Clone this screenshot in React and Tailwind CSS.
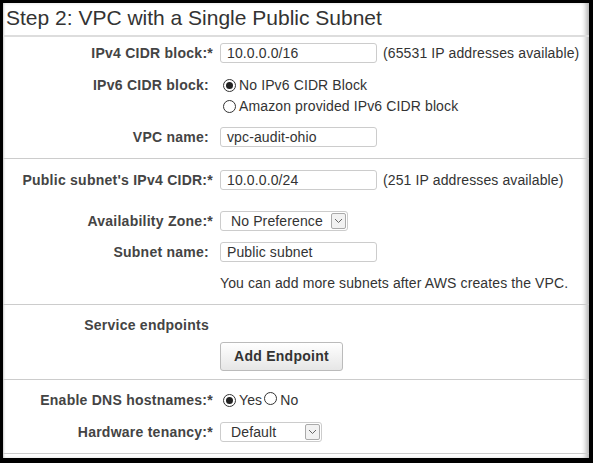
import React from "react";

const F = { fontFamily: '"Liberation Sans", Arial, sans-serif' };

function Label({ children, star, top }) {
  return (
    <div className={`w-[206px] shrink-0 text-right text-[14px] font-bold tracking-[0.25px] text-[#444] ${top ? "self-start leading-[21px]" : ""}`}>
      {children}
      {star ? <span className="mr-[-4px]">*</span> : null}
    </div>
  );
}

function Input({ value, w = "w-[157px]" }) {
  return (
    <div className={`${w} h-[20px] rounded-[3px] border border-[#cccccc] bg-white pl-[6px] text-[14px] leading-[18px] tracking-[0.12px] text-[#333]`}>
      {value}
    </div>
  );
}

function Chevron() {
  return (
    <svg width="9" height="6" viewBox="0 0 9 6">
      <path d="M1 1 L4.5 4.5 L8 1" fill="none" stroke="#666" strokeWidth="1" />
    </svg>
  );
}

function Select({ value, w }) {
  return (
    <div className={`${w} flex h-[20px] items-center justify-between rounded-[3px] border border-[#cccccc] bg-white pl-[10px] pr-[1px] text-[14px] tracking-[0.12px] text-[#333]`}>
      <span className="leading-[18px]">{value}</span>
      <div className="flex h-[16px] w-[15px] items-center justify-center rounded-[2px] border border-[#aaaaaa] bg-[#f2f2f2]">
        <Chevron />
      </div>
    </div>
  );
}

function Radio({ checked }) {
  return (
    <span className="inline-flex h-[13px] w-[13px] items-center justify-center rounded-full border border-[#333] bg-white">
      {checked ? <span className="h-[7px] w-[7px] rounded-full bg-[#222]" /> : null}
    </span>
  );
}

function Row({ children, className = "" }) {
  return <div className={`flex items-center gap-x-[11px] ${className}`}>{children}</div>;
}

export default function App() {
  return (
    <div className="h-[463px] w-[593px] bg-black pl-[3px] pr-[4px] pt-[3px]" style={F}>
      <div className="relative h-[455px] w-[586px] overflow-hidden bg-white shadow-[inset_-5px_0_5px_-2px_rgba(0,0,0,0.3),inset_2px_0_2px_-1px_rgba(0,0,0,0.2)]">
        <div className="flex h-[32px] items-center pb-[3px] pl-[3px] text-[21px] leading-none text-[#333]">
          Step 2: VPC with a Single Public Subnet
        </div>
        <div className="h-[2px] bg-[#dddddd]" />

        <div className="pb-[11px]">
          <Row className="mt-[6px] h-[20px]">
            <Label star>IPv4 CIDR block:</Label>
            <Input value="10.0.0.0/16" />
            <span className="ml-[-5px] text-[14px] tracking-[0.12px] text-[#333]">(65531 IP addresses available)</span>
          </Row>
          <Row className="mt-[12px] items-start">
            <Label top>IPv6 CIDR block:</Label>
            <div className="flex flex-col text-[14px] tracking-[0.12px] text-[#333]">
              <div className="flex h-[21px] items-center gap-[3px] pl-[3px]">
                <Radio checked />
                <span>No IPv6 CIDR Block</span>
              </div>
              <div className="flex h-[21px] items-center gap-[3px] pl-[3px]">
                <Radio />
                <span>Amazon provided IPv6 CIDR block</span>
              </div>
            </div>
          </Row>
          <Row className="mt-[10px] h-[20px]">
            <Label>VPC name:</Label>
            <Input value="vpc-audit-ohio" />
          </Row>
        </div>
        <div className="h-px bg-[#cccccc]" />

        <div className="pb-[11px]">
          <Row className="mt-[11px] h-[20px]">
            <Label star>Public subnet's IPv4 CIDR:</Label>
            <Input value="10.0.0.0/24" />
            <span className="ml-[-5px] text-[14px] tracking-[0.12px] text-[#333]">(251 IP addresses available)</span>
          </Row>
          <Row className="mt-[21px] h-[20px]">
            <Label star>Availability Zone:</Label>
            <Select value="No Preference" w="w-[128px]" />
          </Row>
          <Row className="mt-[11px] h-[20px]">
            <Label>Subnet name:</Label>
            <Input value="Public subnet" />
          </Row>
          <div className="mt-[11px] flex h-[20px] items-center pl-[217px] text-[14px] tracking-[0.12px] text-[#333]">
            You can add more subnets after AWS creates the VPC.
          </div>
        </div>
        <div className="h-px bg-[#cccccc]" />

        <div className="pb-[8px]">
          <Row className="mt-[10px] h-[20px]">
            <Label>Service endpoints</Label>
          </Row>
          <div className="mt-[7px] pl-[217px]">
            <div className="flex h-[29px] w-[123px] items-center justify-center rounded-[3px] border border-[#bbbbbb] bg-gradient-to-b from-white to-[#e6e6e6] text-[14px] font-bold tracking-[0.25px] text-[#333]">
              Add Endpoint
            </div>
          </div>
        </div>
        <div className="h-px bg-[#cccccc]" />

        <div className="pb-[11px]">
          <Row className="mt-[10px] h-[20px]">
            <Label star>Enable DNS hostnames:</Label>
            <div className="flex items-center pl-[3px] text-[14px] tracking-[0.12px] text-[#333]">
              <Radio checked />
              <span className="ml-[3px]">Yes</span>
              <span className="ml-[2px]"><Radio /></span>
              <span className="ml-[3px]">No</span>
            </div>
          </Row>
          <Row className="mt-[12px] h-[20px]">
            <Label star>Hardware tenancy:</Label>
            <Select value="Default" w="w-[102px]" />
          </Row>
        </div>
        <div className="h-px bg-[#cccccc]" />
      </div>
    </div>
  );
}
